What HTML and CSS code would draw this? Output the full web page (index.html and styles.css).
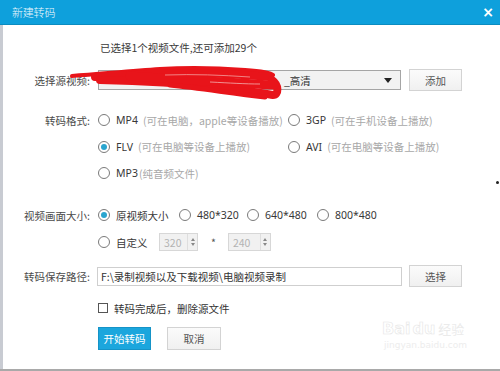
FILE: index.html
```html
<!DOCTYPE html>
<html lang="zh">
<head>
<meta charset="utf-8">
<link rel="stylesheet" href="styles.css">
</head>
<body>
<div class="dialog">
  <div class="titlebar">
    <span class="title">新建转码</span>
    <span class="close">×</span>
  </div>
  <div class="content">
    <div class="info">已选择1个视频文件,还可添加29个</div>

    <div class="row src-row">
      <div class="label">选择源视频:</div>
      <div class="select">
        <span class="select-text">_高清</span>
        <span class="arrow"></span>
      </div>
      <div class="btn">添加</div>
    </div>

    <div class="group fmt-group">
      <div class="row">
        <div class="label">转码格式:</div>
        <div class="opt col1"><span class="radio"></span><span class="name">MP4</span><span class="hint">(可在电脑，apple等设备播放)</span></div>
        <div class="opt"><span class="radio"></span><span class="name">3GP</span><span class="hint">(可在手机设备上播放)</span></div>
      </div>
      <div class="row">
        <div class="label"></div>
        <div class="opt col1"><span class="radio checked"></span><span class="name">FLV</span><span class="hint">(可在电脑等设备上播放)</span></div>
        <div class="opt"><span class="radio"></span><span class="name">AVI</span><span class="hint">(可在电脑等设备上播放)</span></div>
      </div>
      <div class="row">
        <div class="label"></div>
        <div class="opt col1"><span class="radio"></span><span class="name">MP3</span><span class="hint hint-tight">(纯音频文件)</span></div>
      </div>
    </div>

    <div class="group size-group">
      <div class="row">
        <div class="label">视频画面大小:</div>
        <div class="opt s1"><span class="radio checked"></span><span class="name">原视频大小</span></div>
        <div class="opt s2"><span class="radio"></span><span class="name">480*320</span></div>
        <div class="opt s3"><span class="radio"></span><span class="name">640*480</span></div>
        <div class="opt"><span class="radio"></span><span class="name">800*480</span></div>
      </div>
      <div class="row">
        <div class="label"></div>
        <div class="opt custom"><span class="radio"></span><span class="name">自定义</span></div>
        <div class="spin spin1"><span class="spin-val">320</span><span class="spin-btn"><i class="up"></i><i class="down"></i></span></div>
        <span class="times">*</span>
        <div class="spin spin2"><span class="spin-val">240</span><span class="spin-btn"><i class="up"></i><i class="down"></i></span></div>
      </div>
    </div>

    <div class="row path-row">
      <div class="label">转码保存路径:</div>
      <div class="path">F:\录制视频以及下载视频\电脑视频录制</div>
      <div class="btn">选择</div>
    </div>

    <div class="row check-row">
      <div class="label"></div>
      <span class="checkbox"></span><span class="check-text">转码完成后，删除源文件</span>
    </div>

    <div class="row action-row">
      <div class="label"></div>
      <div class="btn primary">开始转码</div>
      <div class="btn cancel">取消</div>
    </div>
  </div>

  <svg class="scribble" width="215" height="40" viewBox="0 0 215 40">
    <path d="M2 13 C30 11 60 8 90 6 C120 4 150 5 175 7 C190 8 200 9 203 12" stroke="#e8141a" stroke-width="4" fill="none" stroke-linecap="round"/>
    <path d="M25 14 C55 12 85 10 115 10 C145 10 175 12 200 14" stroke="#e8141a" stroke-width="8" fill="none" stroke-linecap="round"/>
    <path d="M30 17 C70 18 110 20 150 24 C175 27 195 31 203 32 C209 32 209 22 202 17" stroke="#e8141a" stroke-width="8" fill="none" stroke-linecap="round"/>
    <path d="M60 13 C100 16 140 18 170 20 C185 21 196 22 204 22" stroke="#e8141a" stroke-width="9" fill="none" stroke-linecap="round"/>
    <path d="M100 22 C130 25 160 30 195 34" stroke="#e8141a" stroke-width="5" fill="none" stroke-linecap="round"/>
    <path d="M95 12 C125 11 150 12 180 14" stroke="#f4a0a0" stroke-width="0.8" fill="none"/>
    <path d="M140 19 C160 20 175 21 190 21" stroke="#f4b0b0" stroke-width="0.8" fill="none"/>
  </svg>

  <div class="watermark">
    <div class="wm-top"><span class="wm-bai">Bai</span><span class="wm-du">du</span><span class="wm-jy">经验</span></div>
    <div class="wm-url">jingyan.baidu.com</div>
  </div>
  <span class="dot"></span>
</div>
</body>
</html>
```

FILE: styles.css
```css
* { box-sizing: border-box; }
html, body { margin: 0; padding: 0; }
body {
  width: 500px;
  height: 371px;
  overflow: hidden;
  background: #fff;
  font-family: "Noto Sans CJK SC", "Noto Sans", sans-serif;
  font-size: 10.5px;
  color: #4a4a4a;
}
.dialog {
  position: relative;
  width: 500px;
  height: 371px;
  border-bottom: 2px solid #a9a9a9;
}
.titlebar {
  height: 25px;
  background: #0ea0dc;
  border-bottom: 1px solid #0b8cc0;
  display: flex;
  align-items: center;
  justify-content: space-between;
  padding: 0 6px 0 12px;
  color: #eef8fd;
}
.title { font-size: 11px; letter-spacing: -0.2px; font-weight: 300; }
.close { font-family: "DejaVu Sans", sans-serif; font-size: 14px; font-weight: bold; line-height: 1; color: #fff; }
.content {
  height: 344px;
  border-left: 3px solid #c8cbd2;
  padding-top: 15px;
  display: flex;
  flex-direction: column;
}
.info { padding-left: 97px; height: 16px; line-height: 16px; color: #3a3a3a; }
.row { display: flex; align-items: center; }
.label {
  width: 87px;
  flex: none;
  margin-right: 8px;
  text-align: right;
  color: #4a4a4a;
  white-space: nowrap;
}
.src-row { margin-top: 13px; height: 22px; }
.select {
  width: 303px;
  height: 20px;
  border: 1px solid #a5a5a5;
  background: #f2f2f2;
  display: flex;
  align-items: center;
  justify-content: space-between;
  padding: 0 8px 0 185px;
  color: #333;
}
.arrow {
  width: 0; height: 0;
  border-left: 4px solid transparent;
  border-right: 4px solid transparent;
  border-top: 5px solid #222;
}
.btn {
  margin-left: 8px;
  width: 53px;
  height: 22px;
  border: 1px solid #d3d3d3;
  background: linear-gradient(#fbfbfb, #f0f0f0);
  display: flex;
  align-items: center;
  justify-content: center;
  color: #555;
}
.group { display: flex; flex-direction: column; gap: 6.5px; }
.group .row { height: 20px; }
.fmt-group { margin-top: 19px; }
.size-group { margin-top: 22px; gap: 7px; }
.opt { display: flex; align-items: center; white-space: nowrap; }
.col1 { width: 190px; }
.s1 { width: 81px; }
.s2 { width: 68px; }
.s3 { width: 70px; }
.custom { width: 61px; }
.radio {
  width: 12px; height: 12px;
  border: 1px solid #7a7a7a;
  border-radius: 50%;
  background: #fff;
  margin-right: 6px;
  flex: none;
  display: flex;
  align-items: center;
  justify-content: center;
}
.radio.checked::after {
  content: "";
  width: 6px; height: 6px;
  border-radius: 50%;
  background: #2aa5cf;
}
.name { color: #383838; font-family: "Noto Sans", "Noto Sans CJK SC", sans-serif; font-size: 10.5px; }
.custom .name, .s1 .name { font-family: "Noto Sans CJK SC", sans-serif; }
.hint { color: #a8a8a8; margin-left: 5px; font-size: 10.5px; }
.hint-tight { margin-left: 1px; }
.spin {
  height: 18px;
  border: 1px solid #d7d7d7;
  background: #f1f1f1;
  display: flex;
  align-items: center;
  justify-content: space-between;
  color: #b3b3b3;
  padding-left: 4px;
}
.spin1 { width: 39px; }
.spin2 { width: 43px; }
.spin-btn {
  width: 10px; height: 16px;
  border-left: 1px solid #dedede;
  display: flex;
  flex-direction: column;
  align-items: center;
  justify-content: center;
  gap: 2px;
}
.spin-btn i { width: 0; height: 0; border-left: 2px solid transparent; border-right: 2px solid transparent; }
.spin-btn .up { border-bottom: 3px solid #888; }
.spin-btn .down { border-top: 3px solid #888; }
.times { margin: 0 12px 0 13px; color: #555; }
.path-row { margin-top: 13px; height: 22px; }
.path {
  width: 305px;
  height: 19px;
  margin-left: -1px;
  border: 1px solid #cfcfcf;
  background: #fff;
  padding-left: 3px;
  display: flex;
  align-items: center;
  color: #333;
}
.path-row .btn { margin-left: 7px; }
.check-row { margin-top: 13px; height: 16px; }
.checkbox {
  width: 10px; height: 10px;
  border: 1px solid #555;
  background: #fff;
  margin-right: 6px;
}
.check-text { color: #333; }
.action-row { margin-top: 11px; height: 23px; }
.action-row .btn { height: 23px; }
.btn.primary {
  margin-left: 0;
  background: #1ba6dd;
  border-color: #1593c7;
  color: #fff;
}
.btn.cancel { margin-left: 16px; width: 54px; }
.scribble { position: absolute; left: 70px; top: 63px; }
.watermark {
  position: absolute;
  left: 382px;
  top: 320px;
  color: #ececec;
  font-family: "DejaVu Sans", sans-serif;
}
.wm-top { display: flex; align-items: flex-end; font-size: 16px; font-weight: bold; line-height: 18px; }
.wm-bai { color: #fff; -webkit-text-stroke: 0.6px #e6e6e6; }
.wm-du { color: #fff; -webkit-text-stroke: 0.6px #e6e6e6; margin-left: 2px; }
.wm-jy { font-family: "Noto Sans CJK SC", sans-serif; font-size: 13px; font-weight: normal; margin-left: 3px; color: #ebebeb; }
.wm-url { font-size: 9px; color: #ededed; margin-top: 2px; padding-left: 2px; }
.dot { position: absolute; left: 496px; top: 181px; width: 3px; height: 3px; border-radius: 50%; background: #222; }
```
